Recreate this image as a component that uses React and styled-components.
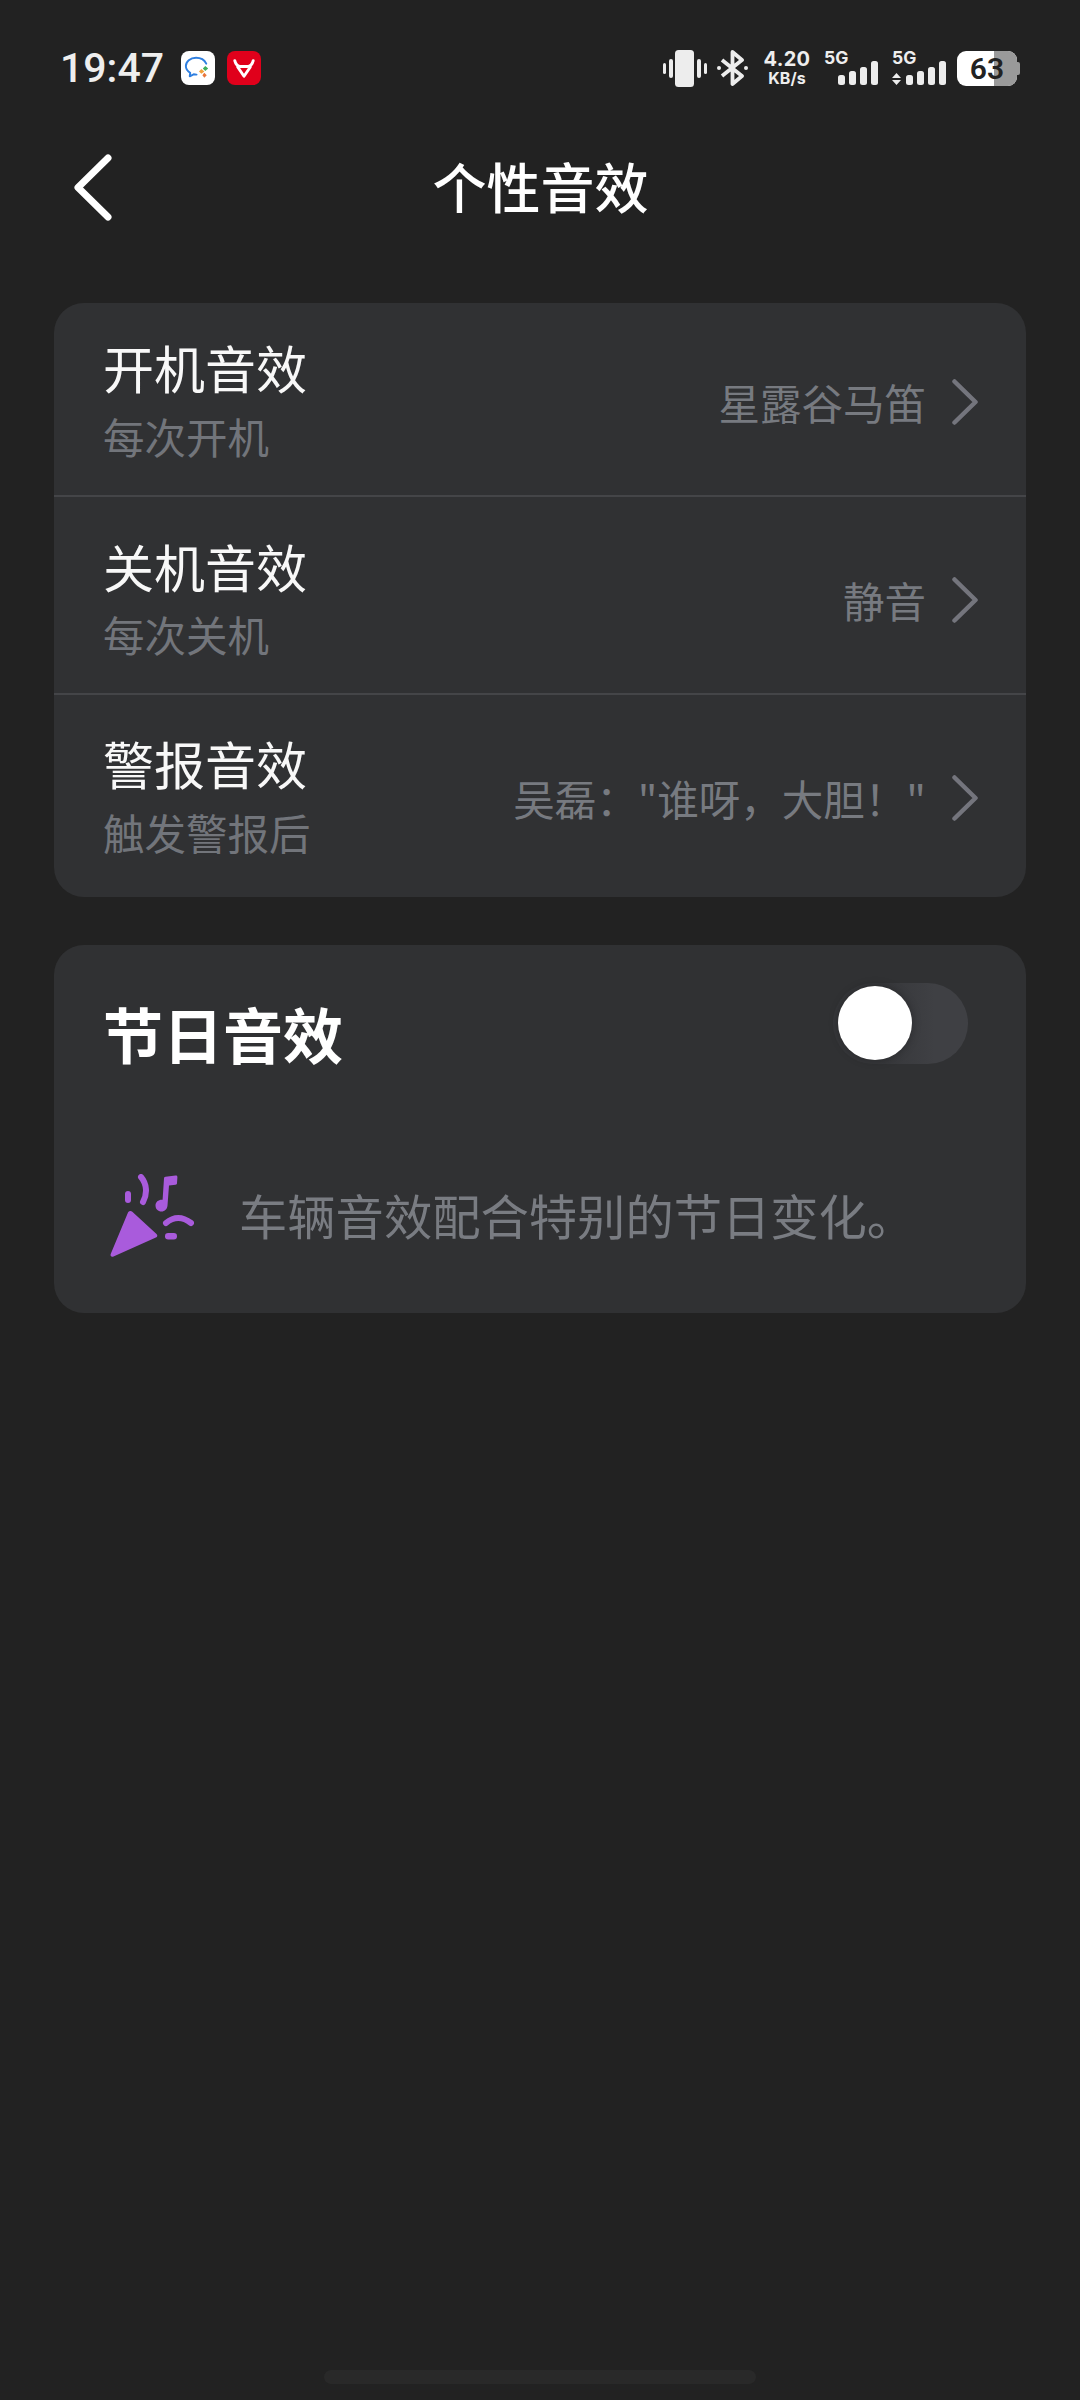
import React from "react";
import styled, { createGlobalStyle } from "styled-components";

const cjk = `"Noto Sans CJK SC", "Noto Sans", sans-serif`;

const rows = [
  { title: "开机音效", sub: "每次开机", value: "星露谷马笛", top: 32, bottom: 26 },
  { title: "关机音效", sub: "每次关机", value: "静音", top: 37, bottom: 26 },
  { title: "警报音效", sub: "触发警报后", value: '吴磊："谁呀，大胆！"', top: 36, bottom: 32 },
];

const SignalGroup = ({ arrows }) => (
  <Signal>
    <SignalLabel>5G</SignalLabel>
    <Bars>
      {arrows && (
        <Arrows width="9" height="12" viewBox="0 0 9 12" fill="#ededed">
          <path d="M4.500 0L9 5H0zM4.500 12L9 7H0z" />
        </Arrows>
      )}
      {[10, 14, 18, 24].map((h) => (
        <Bar key={h} $h={h} />
      ))}
    </Bars>
  </Signal>
);

const App = () => (
  <Page>
    <GlobalStyle />
    <StatusBar>
      <StatusLeft>
        <Clock>19:47</Clock>
        <AppBadge $bg="#fff">
          <svg width="34" height="34" viewBox="0 0 35 35" fill="none">
            <path d="M26 13C24 9 20 7 15.500 7C9.500 7 5 11 5 15.500C5 18.500 7 21 9.500 22.500L9 26L13 24C14 24.200 15 24.300 16 24.300" stroke="#2f7fe0" strokeWidth="2" strokeLinecap="round" strokeLinejoin="round" />
            <path d="M25 15.500l3 2.500-3 2.500-2.500-2.500z" fill="#3fae5a" />
            <path d="M21 18.500l3 2.500-3 2.500-2.500-2.500z" fill="#f0a23a" />
            <path d="M24 22.500l2.500 2.500-2.500 2.500-2-2.500z" fill="#e8763a" />
          </svg>
        </AppBadge>
        <AppBadge $bg="#e0001b">
          <svg width="34" height="34" viewBox="0 0 35 35" fill="none" stroke="#fff" strokeWidth="3" strokeLinecap="round" strokeLinejoin="round">
            <path d="M8 10c1 4 3 6 6 6h7c3 0 5-2 6-6" />
            <path d="M11 16.500L17.500 26L24 16.500" />
          </svg>
        </AppBadge>
      </StatusLeft>
      <StatusRight>
        <svg width="44" height="37" viewBox="0 0 44 37" fill="#ededed">
          <rect x="0" y="13" width="3" height="11" rx="1.500" />
          <rect x="6" y="9" width="4" height="19" rx="2" />
          <rect x="12" y="0" width="19" height="37" rx="3.500" />
          <rect x="34" y="9" width="4" height="19" rx="2" />
          <rect x="41" y="13" width="3" height="11" rx="1.500" />
        </svg>
        <BluetoothIcon width="31" height="36" viewBox="0 0 31 36" fill="none" stroke="#ededed" strokeWidth="3.800">
          <path d="M5 10L25 26L15.500 34V2L25 10L5 26" strokeLinejoin="round" />
          <circle cx="2" cy="18" r="2" fill="#ededed" stroke="none" />
          <circle cx="29" cy="18" r="2" fill="#ededed" stroke="none" />
        </BluetoothIcon>
        <Speed>
          <SpeedValue>4.20</SpeedValue>
          <SpeedUnit>KB/s</SpeedUnit>
        </Speed>
        <SignalGroup />
        <SignalGroup arrows />
        <Battery>
          <BatteryFill />
          <BatteryText>63</BatteryText>
          <BatteryCap />
        </Battery>
      </StatusRight>
    </StatusBar>

    <Header>
      <BackButton width="46" height="75" viewBox="0 0 46 75" fill="none" stroke="#fff" strokeWidth="7" strokeLinecap="round" strokeLinejoin="round">
        <path d="M38 8L8 37.500L38 67" />
      </BackButton>
      <Title>个性音效</Title>
    </Header>

    <Card>
      {rows.map((row, i) => (
        <Row key={row.title} $divider={i > 0} $top={row.top} $bottom={row.bottom}>
          <RowText>
            <RowTitle>{row.title}</RowTitle>
            <RowSub>{row.sub}</RowSub>
          </RowText>
          <RowValue>{row.value}</RowValue>
          <svg width="26" height="46" viewBox="0 0 26 46" fill="none" stroke="#74757d" strokeWidth="4.500" strokeLinecap="round" strokeLinejoin="round">
            <path d="M2.500 2.500L23.500 23L2.500 43.500" />
          </svg>
        </Row>
      ))}
    </Card>

    <FestivalCard>
      <FestivalTop>
        <FestivalTitle>节日音效</FestivalTitle>
        <Toggle>
          <Knob />
        </Toggle>
      </FestivalTop>
      <FestivalNote>
        <svg width="84" height="84" viewBox="0 0 84 84" fill="#a95bdc">
          <path d="M18 38.500c1-1.800 3-2 4.300-.8L46.500 60c1.300 1.300 1 2.900-.6 3.600L3.500 82.500C1.500 83.300 0 82 .7 80z" />
          <rect x="15" y="17" width="6" height="12" rx="3" />
          <path d="M31 3C37 10 37.500 20 33 28" fill="none" stroke="#a95bdc" strokeWidth="6" strokeLinecap="round" />
          <path d="M54 4.500C54 3.500 54.500 3 55.500 2.800L65.500 1.500C66.800 1.400 67.500 2 67.400 3.200L67 9C67 10 66.500 10.500 65.500 10.700L59 11.500L57.500 31.500C57.200 35 54.800 37.500 51.500 37.500C48 37.500 45.500 35 45.500 31.500C45.500 28 48.500 25.500 52.600 25.800z" />
          <path d="M56 49Q68 39 81 49" fill="none" stroke="#a95bdc" strokeWidth="6" strokeLinecap="round" />
          <rect x="55" y="59" width="12" height="6.500" rx="3.200" />
        </svg>
        <NoteText>车辆音效配合特别的节日变化。</NoteText>
      </FestivalNote>
    </FestivalCard>

    <Spacer />
    <HomeBar />
  </Page>
);

const GlobalStyle = createGlobalStyle`
  html, body {
    margin: 0;
    padding: 0;
    background: #222222;
  }
`;

const Page = styled.div`
  width: 1080px;
  height: 2400px;
  display: flex;
  flex-direction: column;
  background: #222222;
  font-family: ${cjk};
  overflow: hidden;
`;

const StatusBar = styled.div`
  display: flex;
  align-items: center;
  justify-content: space-between;
  height: 68px;
  padding: 34px 63px 0 60px;
`;

const StatusLeft = styled.div`
  display: flex;
  align-items: center;
`;

const Clock = styled.span`
  font-family: Roboto, sans-serif;
  font-size: 41px;
  font-weight: 500;
  color: #eeeeee;
  margin-right: 17px;
`;

const AppBadge = styled.div`
  width: 34px;
  height: 34px;
  border-radius: 8px;
  background: ${(p) => p.$bg};
  margin-right: 12px;
  display: flex;
  align-items: center;
  justify-content: center;
  overflow: hidden;
`;

const StatusRight = styled.div`
  display: flex;
  align-items: center;
`;

const BluetoothIcon = styled.svg`
  margin-left: 10px;
`;

const Speed = styled.div`
  display: flex;
  flex-direction: column;
  align-items: center;
  font-family: Inter, sans-serif;
  color: #eeeeee;
  font-weight: 700;
  width: 46px;
  margin: 0 0 0 16px;
`;

const SpeedValue = styled.span`
  font-size: 20px;
  line-height: 21px;
  letter-spacing: 0.3px;
`;

const SpeedUnit = styled.span`
  font-size: 16px;
  line-height: 17px;
`;

const Signal = styled.div`
  display: flex;
  flex-direction: column;
  width: 54px;
  margin-left: 14px;
`;

const SignalLabel = styled.span`
  font-family: Inter, sans-serif;
  font-size: 17.500px;
  line-height: 12px;
  font-weight: 700;
  color: #eeeeee;
`;

const Bars = styled.div`
  display: flex;
  align-items: flex-end;
  justify-content: flex-end;
  gap: 4px;
  height: 24px;
  margin-top: -3px;
`;

const Arrows = styled.svg`
  margin-right: auto;
`;

const Bar = styled.div`
  width: 7px;
  height: ${(p) => p.$h}px;
  border-radius: 2.500px;
  background: #ededed;
`;

const Battery = styled.div`
  position: relative;
  width: 60px;
  height: 35px;
  margin-left: 11px;
  border-radius: 9px;
  background: #ffffff;
`;

const BatteryFill = styled.div`
  position: absolute;
  top: 0;
  right: 0;
  bottom: 0;
  width: 23px;
  background: #9a9a9a;
  border-radius: 0 9px 9px 0;
`;

const BatteryText = styled.span`
  position: absolute;
  left: 0;
  right: 0;
  top: 0;
  text-align: center;
  font-family: Roboto, sans-serif;
  font-size: 30px;
  line-height: 35px;
  font-weight: 600;
  color: #222222;
`;

const BatteryCap = styled.div`
  position: absolute;
  top: 11px;
  right: -3px;
  width: 3px;
  height: 13px;
  border-radius: 0 2px 2px 0;
  background: #9a9a9a;
`;

const Header = styled.div`
  position: relative;
  display: flex;
  align-items: center;
  justify-content: center;
  height: 120px;
  margin-top: 24px;
`;

const BackButton = styled.svg`
  position: absolute;
  left: 70px;
  top: 24px;
`;

const Title = styled.h1`
  margin: 0 0 0 1px;
  font-size: 54px;
  font-weight: 500;
  color: #ffffff;
  line-height: 1;
`;

const Card = styled.div`
  margin: 57px 54px 0;
  background: #303133;
  border-radius: 30px;
  display: flex;
  flex-direction: column;
  overflow: hidden;
`;

const Row = styled.div`
  display: flex;
  align-items: center;
  padding: ${(p) => p.$top}px 48px ${(p) => p.$bottom}px 49px;
  border-top: ${(p) => (p.$divider ? "2px solid #444548" : "none")};
`;

const RowText = styled.div`
  display: flex;
  flex-direction: column;
  gap: 9.500px;
  padding-bottom: 6px;
  margin-right: auto;
`;

const RowTitle = styled.span`
  font-size: 51px;
  line-height: 64px;
  color: #f8f8f8;
`;

const RowSub = styled.span`
  font-size: 41.500px;
  line-height: 54px;
  color: #72757b;
`;

const RowValue = styled.span`
  font-size: 41.500px;
  color: #777a80;
  margin-right: 26px;
`;

const FestivalCard = styled.div`
  margin: 48px 54px 0;
  height: 368px;
  background: #303133;
  border-radius: 30px;
  padding: 38px 58px 0 49px;
  box-sizing: border-box;
`;

const FestivalTop = styled.div`
  display: flex;
  align-items: flex-start;
  justify-content: space-between;
`;

const FestivalTitle = styled.h2`
  margin: 14px 0 0;
  font-size: 60px;
  font-weight: 700;
  line-height: 72px;
  color: #ffffff;
`;

const Toggle = styled.div`
  width: 135px;
  height: 81px;
  border-radius: 41px;
  background: linear-gradient(90deg, #36373a 35%, #3f4044 75%);
  display: flex;
  align-items: center;
  padding-left: 5px;
  box-sizing: border-box;
`;

const Knob = styled.div`
  width: 74px;
  height: 74px;
  border-radius: 50%;
  background: #ffffff;
  box-shadow: 0 0 10px rgba(0, 0, 0, 0.3);
`;

const FestivalNote = styled.div`
  display: flex;
  align-items: center;
  margin: 105px 0 0 7px;
  gap: 45px;
`;

const NoteText = styled.span`
  font-size: 48.300px;
  color: #797c82;
  padding-bottom: 4px;
`;

const Spacer = styled.div`
  flex: 1;
`;

const HomeBar = styled.div`
  width: 432px;
  height: 14px;
  margin: 0 auto 16px;
  border-radius: 7px;
  background: #292929;
`;

export default App;
